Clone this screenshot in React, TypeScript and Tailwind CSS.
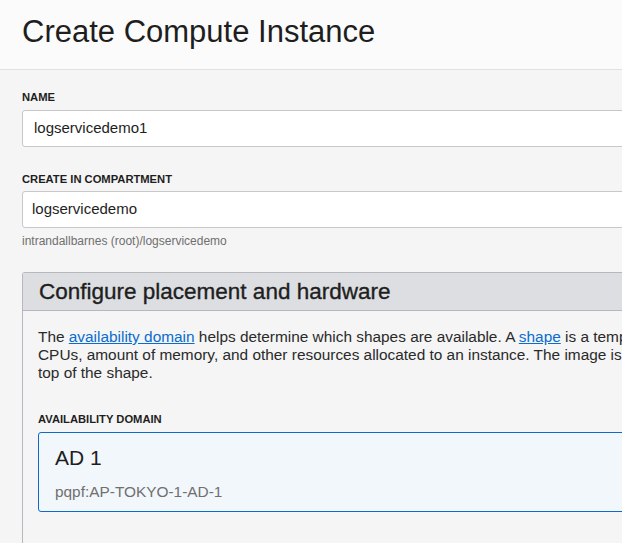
const App = () => {
  return (
    <div
      className="w-[622px] h-[543px] overflow-hidden bg-[#f5f5f5] text-[#161513]"
      style={{ fontFamily: '"Liberation Sans", Arial, sans-serif' }}
    >
      <header className="h-[70px] bg-[#fbfbfb] border-b border-[#e1e1e1] px-[22px] pt-[14px]">
        <h1 className="text-[31px] leading-[36px] text-[#1e1e1e] whitespace-nowrap">Create Compute Instance</h1>
      </header>

      <main className="pl-[22px] w-[780px]">
        <div className="pt-[20px]">
          <label className="block text-[11.2px] leading-[14px] font-semibold text-[#1e1e1e]">NAME</label>
          <div className="mt-[6px] h-[37px] bg-white border border-[#c8c8c8] rounded-[3px] flex items-center pl-[11px] text-[15px] text-[#1e1e1e]">
            logservicedemo1
          </div>
        </div>

        <div className="pt-[25px]">
          <label className="block text-[11.2px] leading-[14px] font-semibold text-[#1e1e1e]">CREATE IN COMPARTMENT</label>
          <div className="mt-[5px] h-[37px] bg-white border border-[#c8c8c8] rounded-[3px] flex items-center pl-[9px] text-[15px] text-[#1e1e1e]">
            logservicedemo
          </div>
          <p className="mt-[5px] text-[12px] leading-[16px] text-[#6f6f6f] whitespace-nowrap">intrandallbarnes (root)/logservicedemo</p>
        </div>

        <section className="mt-[23px] border border-[#b5b9bd] rounded-t-[3px] border-b-0">
          <div className="h-[38px] bg-[#dcdee1] border-b border-[#b5b9bd] pl-[16px]">
            <h2 className="text-[22.5px] leading-[38px] text-[#1e1e1e] whitespace-nowrap [-webkit-text-stroke:0.35px_#1e1e1e]">
              Configure placement and hardware
            </h2>
          </div>
          <div className="px-[15px] pt-[17px] pb-[40px]">
            <p className="text-[15.4px] leading-[18px] text-[#2a2a2a] whitespace-nowrap">
              The <a className="text-[#0a6ccf] underline">availability domain</a> helps determine which shapes are available. A{' '}
              <a className="text-[#0a6ccf] underline">shape</a> is a template that determines the number of
              <br />
              CPUs, amount of memory, and other resources allocated to an instance. The image is the operating system that runs on
              <br />
              top of the shape.
            </p>
            <label className="block mt-[30px] text-[11.2px] leading-[14px] font-semibold text-[#1e1e1e]">AVAILABILITY DOMAIN</label>
            <div className="mt-[6px] h-[80px] bg-[#f2f7fb] border border-[#0b6bcb] rounded-[3px] pl-[16px] pt-[12px]">
              <div className="text-[21px] leading-[26px] text-[#1e1e1e]">AD 1</div>
              <div className="mt-[12px] text-[15.4px] leading-[18px] text-[#6f6f6f] whitespace-nowrap">pqpf:AP-TOKYO-1-AD-1</div>
            </div>
          </div>
        </section>
      </main>
    </div>
  );
};

export default App;
